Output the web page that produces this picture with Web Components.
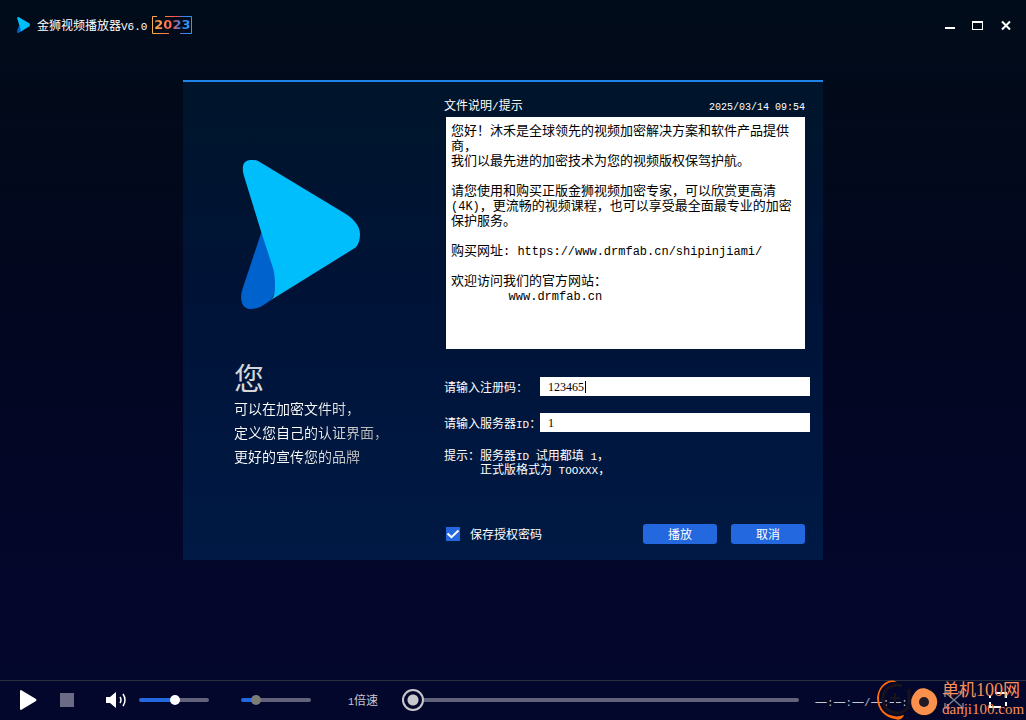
<!DOCTYPE html>
<html lang="zh-CN">
<head>
<meta charset="utf-8">
<meta name="viewport" content="width=device-width, initial-scale=1">
<title>金狮视频播放器V6.0</title>
<style>
  html { height: 100%; }
  body {
    margin: 0;
    min-height: 100%;
    display: flex;
    background: linear-gradient(#010c1a, #020a1a 14%, #020620 45%, #04062c 85%, #04072c);
    color: #fff;
    font: 12px/16px "Noto Sans CJK SC", sans-serif;
    text-spacing-trim: space-all;
  }
</style>
</head>
<body>
<player-app></player-app>

<script>
const define = (name, html, setup) => {
  const template = document.createElement('template');
  template.innerHTML = html.trim();
  customElements.define(name, class extends HTMLElement {
    constructor() {
      super();
      this.attachShadow({ mode: 'open' }).append(template.content.cloneNode(true));
    }
    connectedCallback() { if (setup) setup(this, this.shadowRoot); }
  });
};

/* Half-width run of Latin text inside Chinese text */
define('latin-run', `
<style>
  :host { display: inline; font-family: "Liberation Mono", monospace; font-size: 11px; line-height: 0; white-space: pre; }
  :host([small]) { font-size: 10px; }
  :host([large]) { font-size: 12px; }
</style><slot></slot>`);

define('brand-logo', `
<style>
  :host { display: block; }
  svg { display: block; width: 100%; height: 100%; }
</style>
<svg viewBox="0 0 120 150" preserveAspectRatio="none" aria-hidden="true">
  <path fill="#0062cc" d="M20.5 72 1.2 130C-2 141 2 149 8.700 149 13 149.300 17 148 21 146L30 140 40 120Z"/>
  <path fill="#00bdfc" d="M20.300 72.300 3 16C-.5 4 4 0 10.300 0 13.500 0 15 0 17.500 1.200L105.300 54.300C114 60 119 67 119 74.300 119 80 117.500 84.500 115 87.300L30 140C34 136 34 130 34 125 34 120 33.800 115 32.300 109Z"/>
</svg>`);

define('year-badge', `
<style>
  :host { display: block; position: relative; width: 40px; height: 18px; }
  svg { position: absolute; inset: 0; }
  span {
    display: block; text-align: center;
    font: bold 13px/18px "DejaVu Sans", sans-serif;
    background: linear-gradient(90deg, #ffb04c 5%, #ff5a50 50%, #3a7ff0 72%, #2a9cff);
    -webkit-background-clip: text; background-clip: text; color: transparent;
  }
</style>
<span>2023</span>
<svg width="40" height="18" viewBox="0 0 40 18" fill="none" aria-hidden="true">
  <linearGradient id="g" gradientUnits="userSpaceOnUse" x1="0" y1="0" x2="40" y2="0">
    <stop stop-color="#ffb04c"/><stop offset=".6" stop-color="#ff4f45"/><stop offset=".8" stop-color="#3a7ff0"/><stop offset="1" stop-color="#2a9cff"/>
  </linearGradient>
  <path stroke="url(#g)" d="M5 .5H.5v17H17M13 .5h26.500v17H28"/>
</svg>`);

define('title-bar', `
<style>
  :host { display: flex; align-items: center; height: 50px; padding: 0 14px 0 17px; }
  brand-logo { width: 13px; height: 16px; margin-right: 7px; }
  h1 { margin: 0 5px 0 0; font-size: 12px; font-weight: 400; line-height: 16px; white-space: nowrap; }
  nav { display: flex; gap: 16px; margin-left: auto; }
  button { display: block; width: 12px; height: 12px; padding: 0; border: 0; background: none; color: #fff; }
  svg { display: block; }
</style>
<brand-logo></brand-logo>
<h1>金狮视频播放器<latin-run>V6.0</latin-run></h1>
<year-badge></year-badge>
<nav aria-label="窗口">
  <button aria-label="最小化"><svg width="12" height="12"><path fill="currentColor" d="M1 8h10v2H1z"/></svg></button>
  <button aria-label="最大化"><svg width="12" height="12"><path fill="currentColor" fill-rule="evenodd" d="M0 2h11v9H0zM1 4v6h9V4z"/></svg></button>
  <button aria-label="关闭"><svg width="12" height="12"><path stroke="currentColor" stroke-width="2" d="M2 2.500l8 8M10 2.500l-8 8"/></svg></button>
</nav>`);

define('intro-text', `
<style>
  :host { display: block; }
  h2 { margin: 0 0 2px; font-size: 30px; font-weight: 400; line-height: 36px; color: #d6d6d6; }
  p {
    margin: 0; width: max-content; font-size: 14px; line-height: 24px;
    background: linear-gradient(110deg, #fff 45%, #a8a8a8 90%);
    -webkit-background-clip: text; background-clip: text; color: transparent;
  }
</style>
<h2>您</h2>
<p>可以在加密文件时，<br>定义您自己的认证界面，<br>更好的宣传您的品牌</p>`);

define('notice-box', `
<style>
  :host {
    display: block; box-sizing: border-box; min-height: 232px; padding: 5px;
    background: #fff; color: #000; font-size: 13px; line-height: 15px;
  }
  p { margin: 0 0 15px; white-space: pre; }
</style>
<p>您好！沐禾是全球领先的视频加密解决方案和软件产品提供<br>商，<br>我们以最先进的加密技术为您的视频版权保驾护航。</p>
<p>请您使用和购买正版金狮视频加密专家，可以欣赏更高清<br><latin-run large>(4K)</latin-run>，更流畅的视频课程，也可以享受最全面最专业的加密<br>保护服务。</p>
<p>购买网址<latin-run large>: https://www.drmfab.cn/shipinjiami/</latin-run></p>
<p>欢迎访问我们的官方网站：<br><latin-run large>        www.drmfab.cn</latin-run></p>`);

define('text-field', `
<style>
  :host { display: grid; grid-template-columns: 96px 1fr; align-items: center; position: relative; }
  label { white-space: nowrap; }
  input {
    box-sizing: border-box; width: 100%; height: 19px; margin: 0; padding: 1px 8px 0; border: 0; outline: 0;
    background: #fff; color: #000; font: 12px/18px "Liberation Serif", serif;
  }
  .caret { display: none; position: absolute; left: 141px; top: 4px; width: 1px; height: 12px; background: #000; }
  :host([caret]) .caret { display: block; }
</style>
<label for="f"><slot></slot></label><input id="f" type="text"><i class="caret"></i>`,
(host, root) => { root.querySelector('input').value = host.getAttribute('value') || ''; });

define('auth-panel', `
<style>
  :host {
    box-sizing: border-box; display: grid; grid-template-columns: 261px 1fr;
    width: 100%; max-width: 640px; padding-right: 13px; border-top: 2px solid #1e82e6;
    background: linear-gradient(#00152b, #001338 48%, #001a45);
  }
  aside { padding: 78px 0 0 51px; }
  brand-logo { width: 120px; height: 150px; margin: 0 0 48px 7px; }
  form { padding: 15px 0 16px; }
  header { display: flex; justify-content: space-between; margin: 0 5px 4px 0; }
  notice-box { margin: 0 5px 28px 2px; }
  text-field + text-field { margin-top: 17px; }
  .hint { display: grid; grid-template-columns: 36px 1fr; margin: 16px 0 48px; line-height: 14px; }
  .actions { display: flex; align-items: center; gap: 14px; margin: 0 5px 0 2px; }
  .save { display: flex; align-items: center; gap: 10px; margin-right: auto; }
  .save input {
    appearance: none; width: 14px; height: 14px; margin: 0; background: #2468e0;
  }
  .save input:checked {
    background: #2468e0 url('data:image/svg+xml,<svg xmlns="http://www.w3.org/2000/svg" viewBox="0 0 14 14"><path d="M1.500 6.500 5.500 10.200 12.500 3.500" fill="none" stroke="white" stroke-width="2"/></svg>');
  }
  button {
    width: 74px; height: 20px; padding: 0; border: 0; border-radius: 3px;
    background: #2468e0; color: #fff; font: inherit; line-height: 20px;
  }
</style>
<aside><brand-logo></brand-logo><intro-text></intro-text></aside>
<form onsubmit="return false">
  <header><span>文件说明<latin-run>/</latin-run>提示</span><time datetime="2025-03-14T09:54"><latin-run small>2025/03/14 09:54</latin-run></time></header>
  <notice-box></notice-box>
  <text-field value="123465" caret>请输入注册码：</text-field>
  <text-field value="1">请输入服务器<latin-run>ID</latin-run>：</text-field>
  <div class="hint"><span>提示：</span><span>服务器<latin-run>ID </latin-run>试用都填<latin-run> 1</latin-run>，<br>正式版格式为<latin-run> TOOXXX</latin-run>，</span></div>
  <div class="actions">
    <label class="save"><input type="checkbox" checked>保存授权密码</label>
    <button type="submit">播放</button><button type="button">取消</button>
  </div>
</form>`);

define('range-slider', `
<style>
  :host { display: block; width: 70px; --thumb: #fff; }
  input { appearance: none; display: block; width: 100%; height: 22px; margin: 0; background: none; }
  input::-webkit-slider-runnable-track {
    height: 4px; border-radius: 2px;
    background: linear-gradient(90deg, #2468e0 var(--fill), #62627a var(--fill));
  }
  input::-webkit-slider-thumb {
    appearance: none; width: 10px; height: 10px; margin-top: -3px; border-radius: 50%; background: var(--thumb);
  }
  :host([seek]) { width: auto; }
  :host([seek]) input::-webkit-slider-runnable-track {
    background: linear-gradient(90deg, transparent 11px, #62627a 11px);
  }
  :host([seek]) input::-webkit-slider-thumb {
    box-sizing: border-box; width: 22px; height: 22px; margin-top: -9px; border: 2px solid #c8c8cc;
    background: radial-gradient(circle, #c8c8cc 5px, #04062c 6px);
  }
</style>
<input type="range" min="0" max="100">`,
(host, root) => {
  const input = root.querySelector('input');
  input.value = host.getAttribute('value');
  input.setAttribute('aria-label', host.getAttribute('label'));
  host.style.setProperty('--fill', input.value + '%');
});

define('site-mark', `
<style>
  :host { display: flex; width: 150px; height: 42px; color: #fb8f55; pointer-events: none; }
  svg { flex: none; width: 66px; height: 42px; }
  p { margin: 0; white-space: nowrap; font: 15px/18px "Liberation Serif", serif; }
  p:first-child { font: 17px/22px "Noto Sans CJK SC", sans-serif; }
  b { font: 18px/18px "Liberation Serif", serif; }
</style>
<svg viewBox="0 0 66 42" fill="none" aria-hidden="true">
  <path fill="#ff6a0a" d="M21 4C14-1 2 6 1 20c0 12 9 20 18 21 5 2 8-1 9-4-4 1-7 2-10 1C9 37 3 30 3 20 3 11 9 5 16 4z"/>
  <path stroke="#16131d" stroke-width="3" d="M26 8A14 14 0 1 0 33 28M33 11v16"/>
  <path stroke="#16131d" stroke-width="2" d="M19 15v10M14 20h10"/>
  <circle cx="48" cy="24" r="14" fill="#100e20"/>
  <path fill="#fb8f4c" d="M43 11c3-1 7-1 10 1a13 13 0 1 1-15 4c1-2 3-4 5-5z"/>
  <circle cx="48" cy="24" r="5" fill="#201a26"/>
</svg>
<div><p>单机<b>100</b>网</p><p>danji100.com</p></div>`);

define('control-bar', `
<style>
  :host {
    box-sizing: border-box; position: relative; display: flex; align-items: center;
    height: 40px; padding: 0 18px 1px 20px; border-top: 1px solid #26303f;
  }
  button { flex: none; display: block; padding: 0; border: 0; background: none; color: #fff; }
  svg { display: block; }
  .stop { margin: 0 32px 0 23px; color: #6c6b85; }
  .volume { margin: 0 32px 0 13px; }
  .dim { --thumb: #7d7d78; }
  .speed { margin: 0 24px 0 37px; color: #c8c8cc; white-space: nowrap; }
  .seek { flex: 1; margin-right: 16px; }
  .time { margin-right: 24px; color: #c8c8cc; font-size: 14px; white-space: nowrap; }
  .fit { margin-right: 24px; color: #777a8c; }
  site-mark { position: absolute; right: 0; bottom: 0; }
</style>
<button aria-label="播放"><svg width="17" height="20"><path fill="currentColor" d="M0 1q0-1 1-1L16 9q1 1 0 2L1 20q-1 0-1-1z"/></svg></button>
<button class="stop" aria-label="停止"><svg width="14" height="14"><path fill="currentColor" d="M0 0h14v14H0z"/></svg></button>
<button aria-label="静音"><svg width="20" height="16" fill="none" stroke="currentColor"><path fill="currentColor" stroke="none" d="M0 5h4L10 0v16L4 11H0z"/><path stroke-width="1.500" d="M14 5q2 3 0 6M17 2q4 6 0 12"/></svg></button>
<range-slider class="volume" value="52" label="音量"></range-slider>
<range-slider class="dim" value="17" label="亮度"></range-slider>
<span class="speed"><latin-run small>1</latin-run>倍速</span>
<range-slider class="seek" seek value="0" label="播放进度"></range-slider>
<span class="time">—<latin-run small>:</latin-run>—<latin-run small>:</latin-run>—<latin-run small>/</latin-run>—<latin-run small>:</latin-run>—<latin-run small>:</latin-run>—</span>
<button class="fit" aria-label="适应窗口"><svg width="20" height="18" fill="none" stroke="currentColor"><path stroke-width="1.500" d="M2 2l16 14M18 2L2 16"/><path stroke-width="1.500" d="M1 6V1h5M14 1h5v5M19 12v5h-5M6 17H1v-5"/></svg></button>
<button aria-label="全屏"><svg width="20" height="18" fill="none" stroke="currentColor" stroke-width="2"><path d="M7 2H18V7M13 16H2V11M2 7V4M18 11v4"/></svg></button>
<site-mark></site-mark>`);

define('player-app', `
<style>
  :host { display: flex; flex: 1; flex-direction: column; min-width: 0; }
  main { flex: 1; display: flex; justify-content: center; align-items: flex-start; padding: 30px 20px 40px 0; }
</style>
<title-bar></title-bar>
<main><auth-panel></auth-panel></main>
<control-bar></control-bar>`);
</script>
</body>
</html>
